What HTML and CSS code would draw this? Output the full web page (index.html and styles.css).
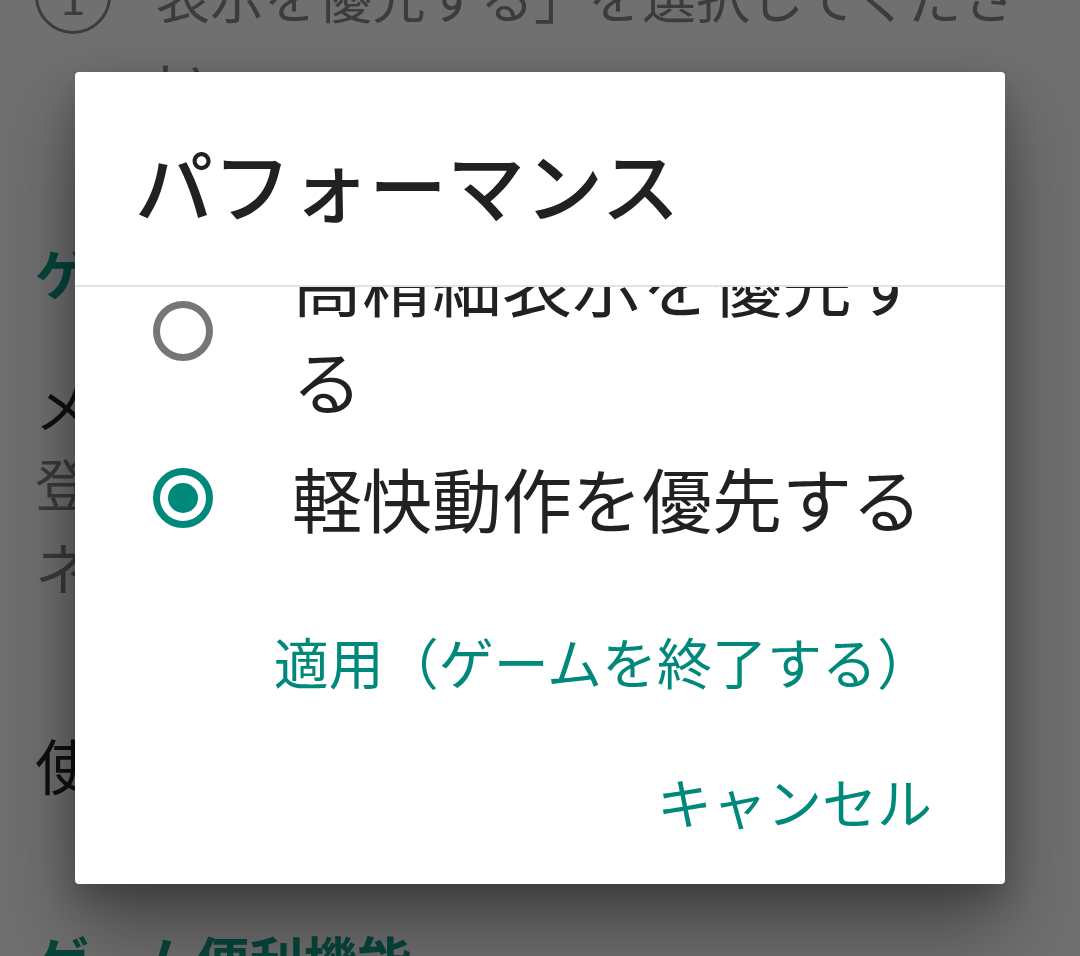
FILE: index.html
```html
<!DOCTYPE html>
<html lang="ja">
<head>
<title>パフォーマンス設定</title>
<meta charset="UTF-8">
<meta name="viewport" content="width=device-width, initial-scale=1.0">
<link rel="stylesheet" href="styles.css">
</head>
<body>

<div class="page">
  <div class="step">
    <span class="step-num">1</span>
    <p class="step-text">グラフィック設定の画面で「高精細表示を優先する」を選択してください。</p>
  </div>

  <h2 class="section-title">ゲーム設定</h2>

  <div class="setting">
    <p class="setting-name">メニューの表示</p>
    <p class="setting-desc">登録したデータを確認します<br>ネットワーク接続が必要です</p>
  </div>

  <div class="setting">
    <p class="setting-name setting-name-alone">使い方ガイド</p>
  </div>

  <h2 class="section-title section-title-low">ゲーム便利機能</h2>
</div>

<div class="scrim"></div>

<div class="dialog">
  <h3 class="dialog-title">パフォーマンス</h3>
  <div class="dialog-divider"></div>

  <div class="choice-list">
    <ul class="choices">
      <li class="choice">
        <span class="radio"></span>
        <span class="choice-label">高精細表示を優先する</span>
      </li>
      <li class="choice">
        <span class="radio radio-on"></span>
        <span class="choice-label">軽快動作を優先する</span>
      </li>
    </ul>
  </div>

  <div class="dialog-actions">
    <button class="dialog-btn">適用（ゲームを終了する）</button>
    <button class="dialog-btn">キャンセル</button>
  </div>
</div>

</body>
</html>
```

FILE: styles.css
```css
html, body {
  margin: 0;
  height: 100%;
  overflow: hidden;
}

body {
  font-family: "Noto Sans CJK JP", "Noto Sans", sans-serif;
  background: #fff;
  position: relative;
}

p, h2, h3, ul {
  margin: 0;
}

/* page behind the dialog */

.page {
  padding: 0 35px;
}

.step {
  display: flex;
  align-items: center;
  gap: 45px;
  margin-top: -132px;
}

.step-num {
  flex: none;
  width: 70px;
  height: 70px;
  border: 3px solid #8a8a8a;
  border-radius: 50%;
  color: #8a8a8a;
  font-size: 44px;
  line-height: 70px;
  text-align: center;
}

.step-text {
  width: 880px;
  font-size: 54px;
  line-height: 85px;
  color: #8a8a8a;
}

.section-title {
  margin-top: 110px;
  font-size: 54px;
  line-height: 78px;
  font-weight: 700;
  color: #12a08a;
}

.section-title-low {
  margin-top: 115px;
}

.setting-name {
  margin-top: 58px;
  font-size: 56px;
  line-height: 70px;
  color: #262626;
}

.setting-name-alone {
  margin-top: 114px;
  font-size: 60px;
  line-height: 84px;
}

.setting-desc {
  margin-top: 1px;
  font-size: 56px;
  line-height: 84px;
  color: #868686;
}

.scrim {
  position: absolute;
  inset: 0;
  background: rgba(0, 0, 0, 0.56);
}

/* dialog */

.dialog {
  position: absolute;
  left: 75px;
  top: 72px;
  width: 930px;
  height: 812px;
  background: #fff;
  border-radius: 4px;
  box-shadow: 0 44px 80px rgba(0, 0, 0, 0.38), 0 12px 30px rgba(0, 0, 0, 0.2);
  display: flex;
  flex-direction: column;
}

.dialog-title {
  padding: 56px 60px 47px;
  font-size: 78px;
  line-height: 110px;
  font-weight: 500;
  color: #212121;
}

.dialog-divider {
  height: 2px;
  background: #e3e3e3;
}

.choice-list {
  height: 288px;
  overflow: hidden;
}

.choices {
  list-style: none;
  padding: 0;
  margin-top: -64px; /* list is scrolled down a bit */
}

.choice {
  display: flex;
  align-items: center;
  gap: 79px;
  padding: 10px 50px 10px 78px;
}

.radio {
  flex: none;
  box-sizing: border-box;
  width: 60px;
  height: 60px;
  border: 7px solid #767676;
  border-radius: 50%;
  display: flex;
  align-items: center;
  justify-content: center;
}

.radio-on {
  border-color: #00897b;
}

.radio-on::after {
  content: "";
  width: 30px;
  height: 30px;
  border-radius: 50%;
  background: #00897b;
}

.choice-label {
  font-size: 70px;
  line-height: 98px;
  color: #212121;
}

.dialog-actions {
  flex: 1;
  display: flex;
  flex-direction: column;
  align-items: flex-end;
  padding: 15px 73px 0 0;
}

.dialog-btn {
  border: 0;
  background: none;
  padding: 0;
  height: 140px;
  font-family: inherit;
  font-size: 55px;
  line-height: 140px;
  color: #00897b;
}
```
